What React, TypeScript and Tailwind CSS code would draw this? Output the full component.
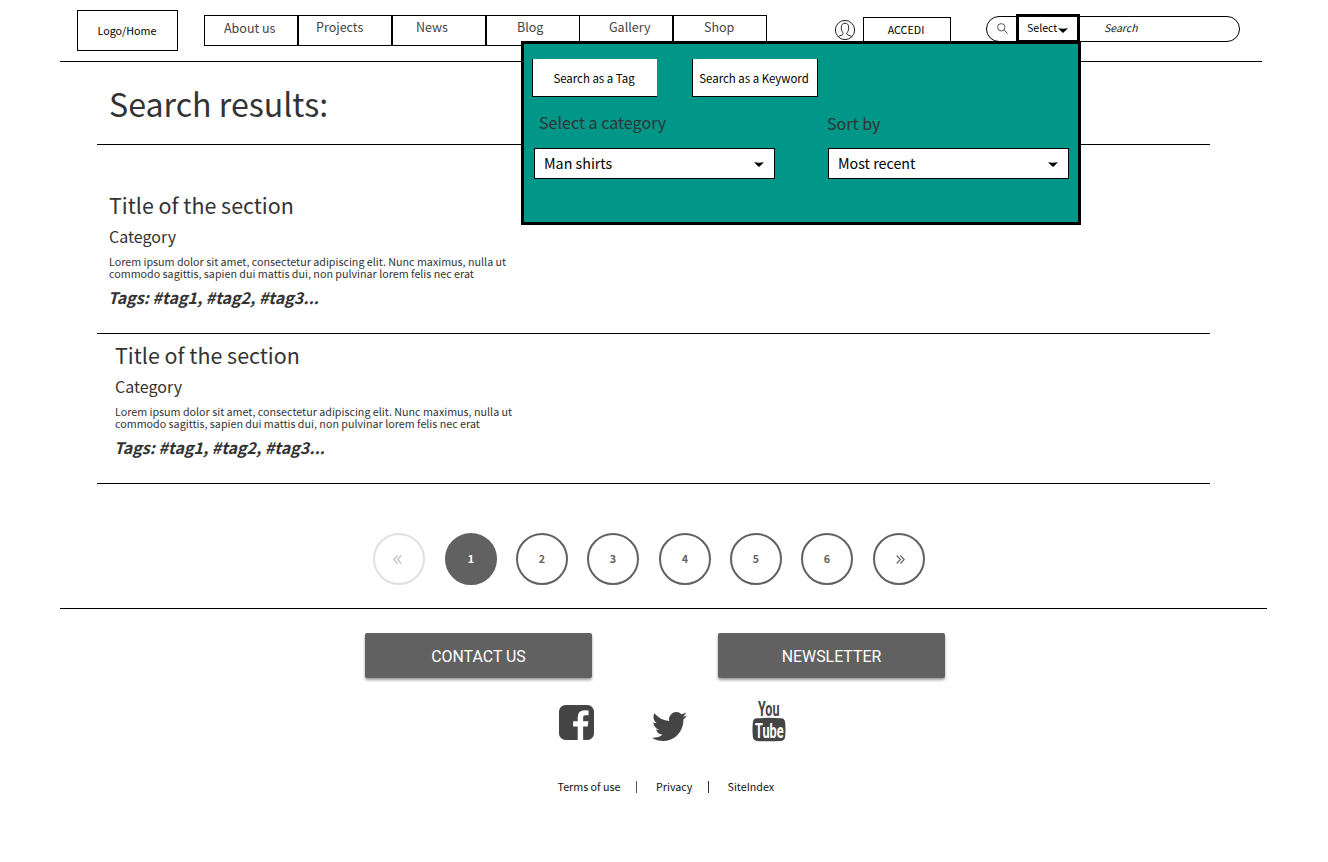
import type { ReactNode } from "react";

const navItems = [
  { label: "About us", className: "w-[94px] pl-[19px] pt-[2px]" },
  { label: "Projects", className: "w-[94px] pl-[17px] pt-px" },
  { label: "News", className: "w-[94px] pl-[23px] pt-px" },
  { label: "Blog", className: "w-[94px] pl-[30px] pt-px" },
  { label: "Gallery", className: "-ml-px w-[94px] pl-[29px] pt-px" },
  { label: "Shop", className: "w-[94px] pl-[30px] pt-px" },
];

const results = [
  { className: "h-[189px] pl-3 pt-11" },
  { className: "h-[150px] pl-[18px] pt-[5px]" },
];

function Caret({ className }: { className: string }) {
  return (
    <svg className={className} viewBox="0 0 10 5" preserveAspectRatio="none">
      <path d="M0 0.3Q5 1 10 0.3L5.6 4.6Q5 5 4.4 4.6Z" fill="#000" />
    </svg>
  );
}

function UserIcon() {
  return (
    <svg className="mt-5 h-5 w-5 shrink-0 overflow-visible" viewBox="0 0 20 20" fill="none" stroke="#222" strokeWidth="1">
      <circle cx="10" cy="10" r="9.6" />
      <path d="M3.3 16.8C4.3 15.2 8.2 15.6 8.2 13.6C8.2 12.4 6.4 11.4 6.4 8.6V6.8C6.4 4.6 7.8 3.2 10 3.2S13.6 4.6 13.6 6.8V8.6C13.6 11.4 11.8 12.4 11.8 13.6C11.8 15.6 15.7 15.2 16.7 16.8" />
    </svg>
  );
}

function Header() {
  return (
    <header className="ml-[60px] flex h-[62px] w-[1202px] items-start border-b border-black pl-[17px]">
      <div className="mt-[10px] flex h-[41px] w-[101px] items-center justify-center border border-black pr-px text-[10.72px] leading-4">
        Logo/Home
      </div>
      <nav className="ml-[26px] mt-[15px] flex text-[12.5px] leading-[19px] text-[#444]">
        {navItems.map((item) => (
          <a key={item.label} className={`h-[31px] whitespace-nowrap border border-black ${item.className}`}>
            {item.label}
          </a>
        ))}
      </nav>
      <div className="ml-[68px] flex">
        <UserIcon />
        <button className="ml-2 mt-[17px] h-[27px] w-[88px] border border-black pb-[2px] pr-[2px] text-[10.72px] leading-4 text-black">
          ACCEDI
        </button>
      </div>
      <div className="ml-[35px] mt-[14px] flex">
        <div className="mt-[2px] flex h-[26px] w-[254px] rounded-full border border-black">
          <svg className="ml-[10px] mt-[6px] h-[11px] w-[11px]" viewBox="0 0 11 11" fill="none" stroke="#444" strokeWidth="0.9">
            <circle cx="4.3" cy="4.3" r="3.7" />
            <path d="M7 7L10.6 10.6" />
          </svg>
          <div className="-mt-[3px] ml-[8px] flex h-[29px] w-[64px] shrink-0 border-[3px] border-black pl-[8px]">
            <span className="mt-[3px] text-[10.6px] leading-4">Select</span>
            <Caret className="ml-px mt-[10.5px] h-[5px] w-[10px]" />
          </div>
          <span className="ml-[24px] mt-[3px] text-[10.5px] italic leading-4 text-[#222]">Search</span>
        </div>
      </div>
    </header>
  );
}

function SelectBox({ value }: { value: string }) {
  return (
    <div className="flex h-[31px] w-[241px] items-center justify-between border border-black bg-white pl-[9px] pr-[10px] text-[14.29px] leading-5">
      <span className="-mt-[2px]">{value}</span>
      <Caret className="mt-[2px] h-[5px] w-[10px]" />
    </div>
  );
}

function SearchPanel() {
  return (
    <section className="absolute left-[521px] top-[41px] h-[184px] w-[560px] border-[3px] border-black bg-[#009688] pl-2 pt-[15px]">
      <div className="flex gap-[35px] text-[11.45px] leading-4">
        <button className="h-[38px] w-[125px] border-b border-l border-black bg-white pr-[2px]">Search as a Tag</button>
        <button className="h-[38px] w-[126px] whitespace-nowrap border-x border-b border-black bg-white pr-[2px]">Search as a Keyword</button>
      </div>
      <div className="mt-[13px] flex gap-[53px] pl-[2px] text-[16.07px] leading-6 text-[#333]">
        <div>
          <div className="pl-[5px]">Select a category</div>
          <div className="mt-[14px] text-black"><SelectBox value="Man shirts" /></div>
        </div>
        <div>
          <div className="-ml-px pt-px">Sort by</div>
          <div className="mt-[13px] text-black"><SelectBox value="Most recent" /></div>
        </div>
      </div>
    </section>
  );
}

function Result({ className }: { className: string }) {
  return (
    <article className={`border-b border-black ${className}`}>
      <h2 className="text-[21.45px] leading-8">Title of the section</h2>
      <div className="mt-[3px] text-[16.03px] leading-6">Category</div>
      <p className="mt-2 whitespace-nowrap text-[10.72px] leading-3">
        Lorem ipsum dolor sit amet, consectetur adipiscing elit. Nunc maximus, nulla ut
        <br />
        commodo sagittis, sapien dui mattis dui, non pulvinar lorem felis nec erat
      </p>
      <div className="-ml-px mt-[5px] text-[16.03px] font-bold italic leading-6">Tags: #tag1, #tag2, #tag3...</div>
    </article>
  );
}

function PageCircle({ className, children }: { className: string; children: ReactNode }) {
  return (
    <button className={`flex h-[52px] w-[52px] items-center justify-center rounded-full border-2 pb-px text-[10.72px] font-bold leading-4 ${className}`}>
      {children}
    </button>
  );
}

function Pagination() {
  return (
    <nav className="ml-[373px] mt-[49px] flex gap-[19px]">
      <PageCircle className="mr-px border-[#e0e0e0] text-[#bdbdbd]">
        <svg className="mr-1 mt-px h-[9px] w-[9px]" viewBox="0 0 9 9" fill="none" stroke="currentColor" strokeWidth="1.1">
          <path d="M4.6 0.5L0.8 4.5L4.6 8.5M8.3 0.5L4.5 4.5L8.3 8.5" />
        </svg>
      </PageCircle>
      <PageCircle className="border-[#616161] bg-[#616161] text-white">1</PageCircle>
      {["2", "3", "4", "5", "6"].map((page) => (
        <PageCircle key={page} className={page === "3" || page === "6" ? "mr-px border-[#616161] text-[#616161]" : "border-[#616161] text-[#616161]"}>
          {page}
        </PageCircle>
      ))}
      <PageCircle className="border-[#616161] text-[#616161]">
        <svg className="ml-[2px] mt-px h-[9px] w-[9px]" viewBox="0 0 9 9" fill="none" stroke="currentColor" strokeWidth="1.1">
          <path d="M0.7 0.5L4.5 4.5L0.7 8.5M4.4 0.5L8.2 4.5L4.4 8.5" />
        </svg>
      </PageCircle>
    </nav>
  );
}

function FooterButton({ children }: { children: ReactNode }) {
  return (
    <button className="h-[45px] w-[227px] rounded-[2px] bg-[#616161] pt-[2px] font-['Roboto',sans-serif] text-[15.9px] leading-5 text-white shadow-[0_2px_3px_rgba(0,0,0,0.4)]">
      {children}
    </button>
  );
}

function Footer() {
  return (
    <footer className="ml-[60px] mt-[23px] w-[1207px] border-t border-black pt-6">
      <div className="ml-[305px] flex gap-[126px]">
        <FooterButton>CONTACT US</FooterButton>
        <FooterButton>NEWSLETTER</FooterButton>
      </div>
      <div className="ml-[499px] mt-[22px] flex h-[44px] items-start">
        <svg className="mt-[5px] h-[35px] w-[35px]" viewBox="0 128 1536 1536" fill="#444">
          <path d="M1248 128q119 0 203.500 84.500t84.500 203.500v960q0 119-84.500 203.500t-203.500 84.500h-188v-595h199l30-232h-229v-148q0-56 23.500-84t91.500-28l122-1v-207q-63-9-178-9-136 0-217.500 80t-81.500 226v171h-200v232h200v595h-532q-119 0-203.500-84.500t-84.500-203.500v-960q0-119 84.500-203.500t203.500-84.500h960z" />
        </svg>
        <svg className="ml-[58px] mt-[12px] h-[29px] w-[35px]" viewBox="108 256 1576 1280" preserveAspectRatio="none" fill="#444">
          <path d="M1684 408q-67 98-162 167 1 14 1 42 0 130-38 259.500t-115.500 248.500-184.500 210.500-258 146-323 54.500q-271 0-496-145 35 4 78 4 225 0 401-138-105-2-188-64.500t-114-159.500q33 5 61 5 43 0 85-11-112-23-185.500-111.500t-73.500-205.500v-4q68 38 146 41-66-44-105-115t-39-154q0-88 44-163 121 149 294.500 238.500t371.500 99.500q-8-38-8-74 0-134 94.500-228.500t228.500-94.500q140 0 236 102 109-21 205-78-37 115-142 178 93-10 186-50z" />
        </svg>
        <svg className="ml-[65px] h-[44px] w-[34px] overflow-visible" viewBox="0 0 34 44">
          <path d="M5 18.300Q17 17.300 29 18.300Q32.600 18.600 33.100 22Q33.900 29.500 33.100 37Q32.600 40.600 29 40.900Q17 41.700 5 40.900Q1.400 40.600 0.900 37Q0.100 29.500 0.900 22Q1.400 18.600 5 18.300Z" fill="#444" />
          <g className="font-['Roboto',sans-serif] font-bold">
            <text x="6" y="16.200" fontSize="20" textLength="21.500" lengthAdjust="spacingAndGlyphs" fill="#444">You</text>
            <text x="3" y="37.500" fontSize="20" textLength="28.500" lengthAdjust="spacingAndGlyphs" fill="#fff">Tube</text>
          </g>
        </svg>
      </div>
      <div className="ml-[497.5px] mt-[35px] flex text-[10.72px] leading-4 text-[#111]">
        <a className="w-[78.5px]">Terms of use</a>
        <span className="mr-[19px] mt-[2px] h-3 w-px bg-[#555]" />
        <a className="w-[52px]">Privacy</a>
        <span className="mr-[18.5px] mt-[2px] h-3 w-px bg-[#333]" />
        <a>SiteIndex</a>
      </div>
    </footer>
  );
}

export default function App() {
  return (
    <div className="relative h-[862px] w-[1328px] overflow-hidden bg-white font-['Noto_Sans_CJK_SC',sans-serif] text-black">
      <Header />
      <main className="ml-[97px] w-[1113px] text-[#333]">
        <div className="h-[83px] border-b border-black pl-3 pt-[17px]">
          <h1 className="text-[32.15px] leading-[48px]">Search results:</h1>
        </div>
        {results.map((result, index) => (
          <Result key={index} className={result.className} />
        ))}
      </main>
      <Pagination />
      <Footer />
      <SearchPanel />
    </div>
  );
}
